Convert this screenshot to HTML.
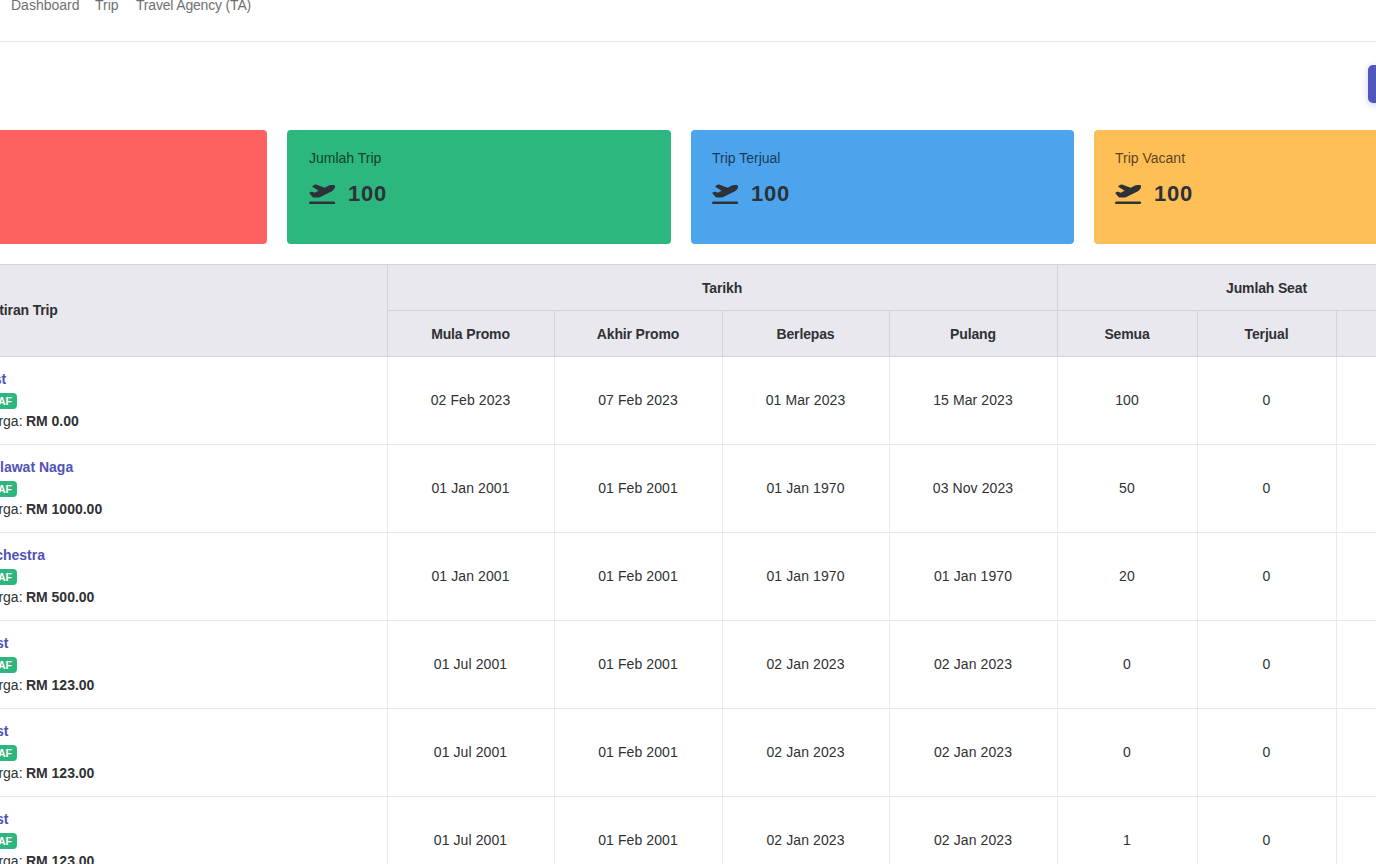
<!DOCTYPE html>
<html><head><meta charset="utf-8">
<style>
html,body{margin:0;padding:0;}
body{width:1376px;height:864px;overflow:hidden;position:relative;background:#fff;font-family:"Liberation Sans",sans-serif;color:#2b2d2f;}
.abs{position:absolute;}
.nav{position:absolute;top:-3px;font-size:14px;color:#707072;white-space:nowrap;line-height:16px;}
.hr{position:absolute;left:0;top:41px;width:1376px;height:1px;background:#e8e8ec;}
.btn{position:absolute;left:1368px;top:65px;width:40px;height:38px;background:#5056bb;border-radius:5px;box-shadow:0 2px 7px rgba(90,95,230,0.3);}
.card{position:absolute;top:130px;height:114px;border-radius:4px;}
.card .lbl{position:absolute;left:22px;top:20px;font-size:14px;line-height:16px;color:rgba(0,0,0,0.68);white-space:nowrap;}
.card .ico{position:absolute;left:21.5px;top:53px;width:26.3px;height:21px;}
.card .num{position:absolute;left:61px;top:52px;font-size:22px;letter-spacing:0.8px;font-weight:bold;line-height:24px;color:#2c3238;}
.th{position:absolute;font-size:14px;letter-spacing:-0.15px;font-weight:bold;line-height:16px;text-align:center;color:#2f3133;white-space:nowrap;}
.td{position:absolute;font-size:14px;letter-spacing:0.1px;line-height:16px;text-align:center;color:#2f3133;white-space:nowrap;}
.nm{position:absolute;right:1303px;font-size:14px;font-weight:bold;line-height:16px;color:#4f53b8;white-space:nowrap;}
.badge{position:absolute;right:1359.3px;height:15.6px;padding:0 4.8px;border-radius:4px;background:#2db67e;color:#fff;font-size:10.5px;font-weight:bold;line-height:17.5px;white-space:nowrap;}
.pr{position:absolute;left:-19.5px;font-size:14px;line-height:16px;color:#2f3133;white-space:nowrap;}
.pr b{font-weight:bold;margin-left:-0.5px;}
</style></head><body>
<div class="nav" style="left:11px">Dashboard</div>
<div class="nav" style="left:95px">Trip</div>
<div class="nav" style="left:136px;letter-spacing:-0.18px">Travel Agency (TA)</div>
<div class="hr"></div>
<div class="btn"></div>

<div class="card" style="left:-120px;width:387px;background:#fe6260"></div>
<div class="card" style="left:287px;width:384px;background:#2db67e">
  <div class="lbl">Jumlah Trip</div>
  <svg class="ico" viewBox="0 0 640 512"><path fill="#2c3238" d="M381 114.9L186.1 41.8c-16.7-6.2-35.2-5.3-51.1 2.7L89.1 67.4C78 73 77.2 88.5 87.6 95.2l146.9 94.5L136 240 77.8 214.1c-8.7-3.9-18.8-3.700-27.3 .6L18.3 230.8c-9.3 4.700-11.8 16.8-5 24.7l73.1 85.3c6.1 7.1 15 11.2 24.3 11.2H248.4c5 0 9.9-1.2 14.3-3.4L535.6 212.2c46.5-23.3 82.5-63.3 100.8-112C645.9 75 627.2 48 600.200 48H542.8c-20.2 0-40.2 4.8-58.2 14L381 114.9zM0 480c0 17.7 14.3 32 32 32H608c17.7 0 32-14.3 32-32s-14.3-32-32-32H32c-17.700 0-32 14.3-32 32z"/></svg>
  <div class="num">100</div>
</div>
<div class="card" style="left:691px;width:383px;background:#4ca4ec">
  <div class="lbl" style="left:21px">Trip Terjual</div>
  <svg class="ico" style="left:20.8px" viewBox="0 0 640 512"><path fill="#2c3238" d="M381 114.9L186.1 41.8c-16.7-6.2-35.2-5.3-51.1 2.7L89.1 67.4C78 73 77.2 88.5 87.6 95.2l146.9 94.5L136 240 77.8 214.1c-8.7-3.9-18.8-3.700-27.3 .6L18.3 230.8c-9.3 4.700-11.8 16.8-5 24.7l73.1 85.3c6.1 7.1 15 11.2 24.3 11.2H248.4c5 0 9.9-1.2 14.3-3.4L535.6 212.2c46.5-23.3 82.5-63.3 100.8-112C645.9 75 627.2 48 600.200 48H542.8c-20.2 0-40.2 4.8-58.2 14L381 114.9zM0 480c0 17.7 14.3 32 32 32H608c17.7 0 32-14.3 32-32s-14.3-32-32-32H32c-17.700 0-32 14.3-32 32z"/></svg>
  <div class="num" style="left:60px">100</div>
</div>
<div class="card" style="left:1094px;width:384px;background:#fdbf56">
  <div class="lbl" style="left:21px">Trip Vacant</div>
  <svg class="ico" style="left:20.8px" viewBox="0 0 640 512"><path fill="#2c3238" d="M381 114.9L186.1 41.8c-16.7-6.2-35.2-5.3-51.1 2.7L89.1 67.4C78 73 77.2 88.5 87.6 95.2l146.9 94.5L136 240 77.8 214.1c-8.7-3.9-18.8-3.700-27.3 .6L18.3 230.8c-9.3 4.700-11.8 16.8-5 24.7l73.1 85.3c6.1 7.1 15 11.2 24.3 11.2H248.4c5 0 9.9-1.2 14.3-3.4L535.6 212.2c46.5-23.3 82.5-63.3 100.8-112C645.9 75 627.2 48 600.200 48H542.8c-20.2 0-40.2 4.8-58.2 14L381 114.9zM0 480c0 17.7 14.3 32 32 32H608c17.7 0 32-14.3 32-32s-14.3-32-32-32H32c-17.700 0-32 14.3-32 32z"/></svg>
  <div class="num" style="left:60px">100</div>
</div>

<!-- TABLE -->
<div class="abs" style="left:0;top:264px;width:1376px;height:93px;background:#e9e8ef"></div>
<div class="abs" style="left:0;top:264px;width:1376px;height:1px;background:#d4d3da"></div>
<div class="abs" style="left:387px;top:310px;width:989px;height:1px;background:#d4d3da"></div>
<div class="abs" style="left:0;top:356px;width:1376px;height:1px;background:#d4d3da"></div>
<div class="abs" style="left:387px;top:264px;width:1px;height:93px;background:#d4d3da"></div>
<div class="abs" style="left:1057px;top:264px;width:1px;height:93px;background:#d4d3da"></div>
<div class="abs" style="left:554px;top:310px;width:1px;height:47px;background:#d4d3da"></div>
<div class="abs" style="left:722px;top:310px;width:1px;height:47px;background:#d4d3da"></div>
<div class="abs" style="left:889px;top:310px;width:1px;height:47px;background:#d4d3da"></div>
<div class="abs" style="left:1197px;top:310px;width:1px;height:47px;background:#d4d3da"></div>
<div class="abs" style="left:1336px;top:310px;width:1px;height:47px;background:#d4d3da"></div>
<div class="abs" style="left:387px;top:357px;width:1px;height:507px;background:#e9e8ee"></div>
<div class="abs" style="left:554px;top:357px;width:1px;height:507px;background:#e9e8ee"></div>
<div class="abs" style="left:722px;top:357px;width:1px;height:507px;background:#e9e8ee"></div>
<div class="abs" style="left:889px;top:357px;width:1px;height:507px;background:#e9e8ee"></div>
<div class="abs" style="left:1057px;top:357px;width:1px;height:507px;background:#e9e8ee"></div>
<div class="abs" style="left:1197px;top:357px;width:1px;height:507px;background:#e9e8ee"></div>
<div class="abs" style="left:1336px;top:357px;width:1px;height:507px;background:#e9e8ee"></div>
<div class="abs" style="left:0;top:444px;width:1376px;height:1px;background:#e9e8ee"></div>
<div class="abs" style="left:0;top:532px;width:1376px;height:1px;background:#e9e8ee"></div>
<div class="abs" style="left:0;top:620px;width:1376px;height:1px;background:#e9e8ee"></div>
<div class="abs" style="left:0;top:708px;width:1376px;height:1px;background:#e9e8ee"></div>
<div class="abs" style="left:0;top:796px;width:1376px;height:1px;background:#e9e8ee"></div>
<div class="th" style="left:-19px;top:302px;text-align:left">Butiran Trip</div>
<div class="th" style="left:387px;width:670px;top:280px">Tarikh</div>
<div class="th" style="left:1057px;width:419px;top:280px">Jumlah Seat</div>
<div class="th" style="left:387px;width:167px;top:326px">Mula Promo</div>
<div class="th" style="left:554px;width:168px;top:326px">Akhir Promo</div>
<div class="th" style="left:722px;width:167px;top:326px">Berlepas</div>
<div class="th" style="left:889px;width:168px;top:326px">Pulang</div>
<div class="th" style="left:1057px;width:140px;top:326px">Semua</div>
<div class="th" style="left:1197px;width:139px;top:326px">Terjual</div>
<div class="nm" style="top:371px;right:1369.8px">Test</div>
<div class="badge" style="top:393px">DRAF</div>
<div class="pr" style="top:413px"><span class="hg">Harga: </span><b>RM 0.00</b></div>
<div class="td" style="left:387px;width:167px;top:392px">02 Feb 2023</div>
<div class="td" style="left:554px;width:168px;top:392px">07 Feb 2023</div>
<div class="td" style="left:722px;width:167px;top:392px">01 Mar 2023</div>
<div class="td" style="left:889px;width:168px;top:392px">15 Mar 2023</div>
<div class="td" style="left:1057px;width:140px;top:392px">100</div>
<div class="td" style="left:1197px;width:139px;top:392px">0</div>
<div class="nm" style="top:459px;right:1302.8px">Melawat Naga</div>
<div class="badge" style="top:481px">DRAF</div>
<div class="pr" style="top:501px"><span class="hg">Harga: </span><b>RM 1000.00</b></div>
<div class="td" style="left:387px;width:167px;top:480px">01 Jan 2001</div>
<div class="td" style="left:554px;width:168px;top:480px">01 Feb 2001</div>
<div class="td" style="left:722px;width:167px;top:480px">01 Jan 1970</div>
<div class="td" style="left:889px;width:168px;top:480px">03 Nov 2023</div>
<div class="td" style="left:1057px;width:140px;top:480px">50</div>
<div class="td" style="left:1197px;width:139px;top:480px">0</div>
<div class="nm" style="top:547px;right:1331.0px">Orchestra</div>
<div class="badge" style="top:569px">DRAF</div>
<div class="pr" style="top:589px"><span class="hg">Harga: </span><b>RM 500.00</b></div>
<div class="td" style="left:387px;width:167px;top:568px">01 Jan 2001</div>
<div class="td" style="left:554px;width:168px;top:568px">01 Feb 2001</div>
<div class="td" style="left:722px;width:167px;top:568px">01 Jan 1970</div>
<div class="td" style="left:889px;width:168px;top:568px">01 Jan 1970</div>
<div class="td" style="left:1057px;width:140px;top:568px">20</div>
<div class="td" style="left:1197px;width:139px;top:568px">0</div>
<div class="nm" style="top:635px;right:1367.6px">Ujian Test</div>
<div class="badge" style="top:657px">DRAF</div>
<div class="pr" style="top:677px"><span class="hg">Harga: </span><b>RM 123.00</b></div>
<div class="td" style="left:387px;width:167px;top:656px">01 Jul 2001</div>
<div class="td" style="left:554px;width:168px;top:656px">01 Feb 2001</div>
<div class="td" style="left:722px;width:167px;top:656px">02 Jan 2023</div>
<div class="td" style="left:889px;width:168px;top:656px">02 Jan 2023</div>
<div class="td" style="left:1057px;width:140px;top:656px">0</div>
<div class="td" style="left:1197px;width:139px;top:656px">0</div>
<div class="nm" style="top:723px;right:1367.6px">Ujian Test</div>
<div class="badge" style="top:745px">DRAF</div>
<div class="pr" style="top:765px"><span class="hg">Harga: </span><b>RM 123.00</b></div>
<div class="td" style="left:387px;width:167px;top:744px">01 Jul 2001</div>
<div class="td" style="left:554px;width:168px;top:744px">01 Feb 2001</div>
<div class="td" style="left:722px;width:167px;top:744px">02 Jan 2023</div>
<div class="td" style="left:889px;width:168px;top:744px">02 Jan 2023</div>
<div class="td" style="left:1057px;width:140px;top:744px">0</div>
<div class="td" style="left:1197px;width:139px;top:744px">0</div>
<div class="nm" style="top:811px;right:1367.6px">Ujian Test</div>
<div class="badge" style="top:833px">DRAF</div>
<div class="pr" style="top:853px"><span class="hg">Harga: </span><b>RM 123.00</b></div>
<div class="td" style="left:387px;width:167px;top:832px">01 Jul 2001</div>
<div class="td" style="left:554px;width:168px;top:832px">01 Feb 2001</div>
<div class="td" style="left:722px;width:167px;top:832px">02 Jan 2023</div>
<div class="td" style="left:889px;width:168px;top:832px">02 Jan 2023</div>
<div class="td" style="left:1057px;width:140px;top:832px">1</div>
<div class="td" style="left:1197px;width:139px;top:832px">0</div>
</body></html>
